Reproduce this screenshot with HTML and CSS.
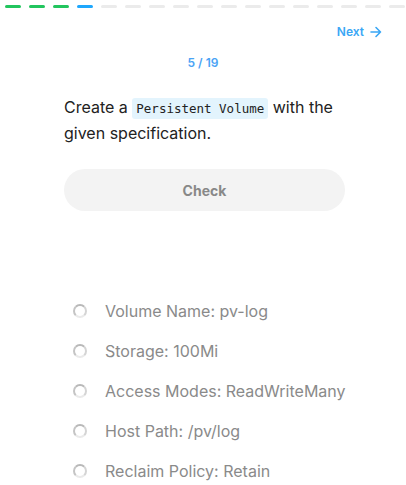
FILE: index.html
```html
<!DOCTYPE html>
<html lang="en">
<head>
    <meta charset="UTF-8">
    <meta name="viewport" content="width=device-width, initial-scale=1.0">
    <title>Persistent Volume</title>
    <link rel="stylesheet" href="styles.css">
</head>
<body>
    <div class="progress">
        <span class="step done"></span>
        <span class="step done"></span>
        <span class="step done"></span>
        <span class="step current"></span>
        <span class="step"></span>
        <span class="step"></span>
        <span class="step"></span>
        <span class="step"></span>
        <span class="step"></span>
        <span class="step"></span>
        <span class="step"></span>
        <span class="step"></span>
        <span class="step"></span>
        <span class="step"></span>
        <span class="step"></span>
        <span class="step"></span>
        <span class="step"></span>
        <span class="step"></span>
        <span class="step"></span>
    </div>

    <div class="top">
        <a class="next" href="#">Next
            <svg width="12" height="12" viewBox="0 0 12 12"><path d="M1 6h9.5M6 1.5 10.5 6 6 10.5" fill="none" stroke="currentColor" stroke-width="1.6" stroke-linecap="round" stroke-linejoin="round"/></svg>
        </a>
    </div>

    <div class="counter">5 / 19</div>

    <div class="task">
        <p class="question">Create a <code>Persistent Volume</code> with the given specification.</p>
        <button class="check">Check</button>

        <ul class="specs">
            <li><span class="radio"></span>Volume Name: pv-log</li>
            <li><span class="radio"></span>Storage: 100Mi</li>
            <li><span class="radio"></span>Access Modes: ReadWriteMany</li>
            <li><span class="radio"></span>Host Path: /pv/log</li>
            <li><span class="radio"></span>Reclaim Policy: Retain</li>
        </ul>
    </div>
</body>
</html>
```

FILE: styles.css
```css
body {
    margin: 0;
    font-family: Inter, "Noto Sans", sans-serif;
    background: #fff;
    color: #222;
    overflow: hidden;
}

.progress {
    display: flex;
    gap: 8px;
    padding: 5px 0 0 5px;
    overflow: hidden;
}

.step {
    flex: 0 0 16px;
    height: 3px;
    border-radius: 2px;
    background: #ebebeb;
}

.step.done {
    background: #22c55e;
}

.step.current {
    background: #1ea7fd;
}

.top {
    display: flex;
    justify-content: flex-end;
    padding: 16px 24px 0 0;
}

.next {
    display: flex;
    align-items: center;
    gap: 6px;
    color: #3aa7f5;
    font-size: 12px;
    font-weight: 600;
    text-decoration: none;
}

.counter {
    margin-top: 16px;
    text-align: center;
    color: #4aa3f5;
    font-size: 12px;
    font-weight: 600;
}

.task {
    padding: 0 61px 0 64px;
}

.question {
    margin: 25px 0 0;
    font-size: 16px;
    line-height: 25px;
}

.question code {
    font-family: "DejaVu Sans Mono", monospace;
    font-size: 12.5px;
    background: #e3f4fd;
    padding: 3px 4px;
    border-radius: 3px;
}

.check {
    display: block;
    width: 100%;
    height: 42px;
    margin-top: 23px;
    border: none;
    border-radius: 21px;
    background: #f3f3f3;
    color: #888;
    font-family: inherit;
    font-size: 14px;
    font-weight: 700;
}

.specs {
    list-style: none;
    margin: 80px 0 0;
    padding: 0 0 0 9px;
}

.specs li {
    display: flex;
    align-items: center;
    gap: 18px;
    height: 40px;
    font-size: 16px;
    color: #8a8a8a;
    white-space: nowrap;
}

.radio {
    flex: none;
    width: 10px;
    height: 10px;
    border-radius: 50%;
    border: 2px solid #d4d4d4;
    border-top-color: #b8b8b8;
    border-left-color: #c4c4c4;
    border-bottom-color: #eaeaea;
}
```
